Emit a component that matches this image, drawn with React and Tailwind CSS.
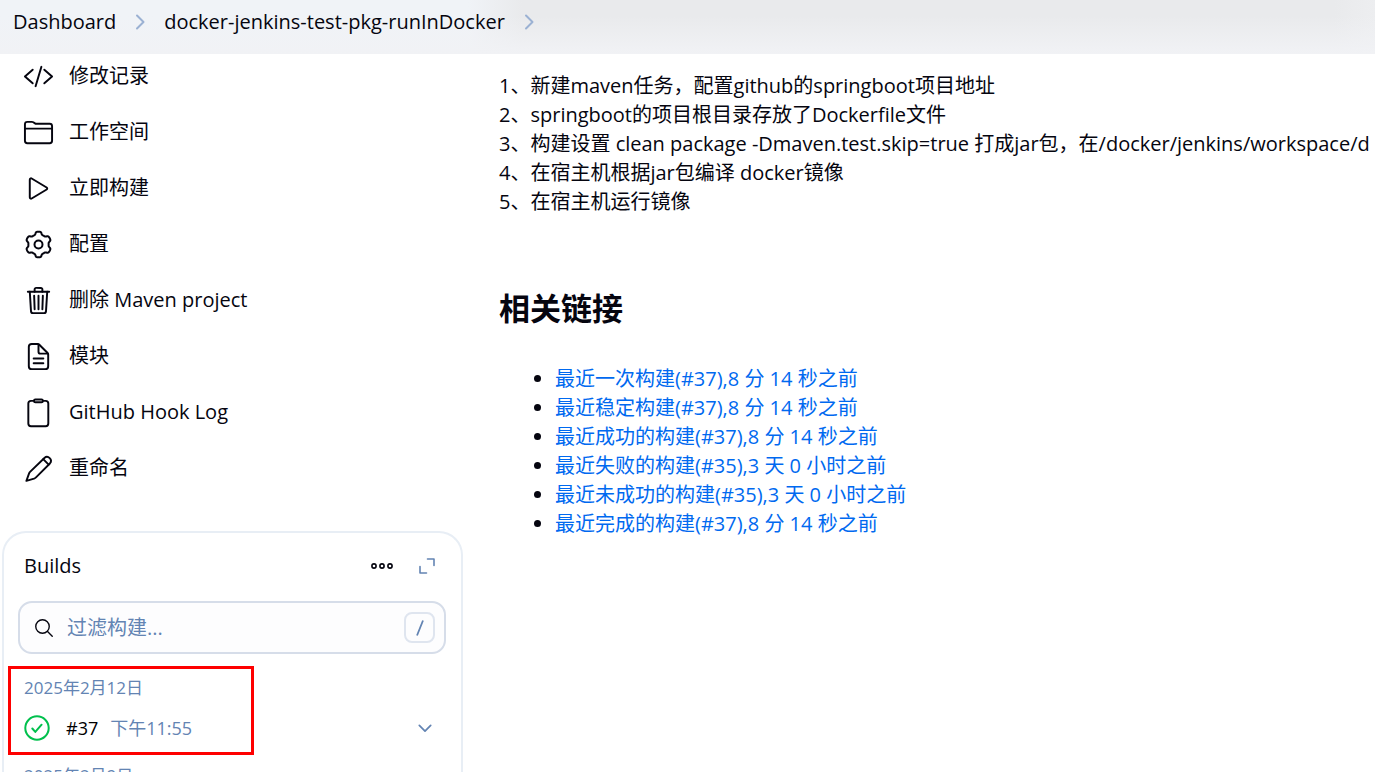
import {
  IoCodeSlashOutline, IoFolderOutline, IoPlayOutline, IoTrashOutline,
  IoDocumentTextOutline, IoSearchOutline,
} from "react-icons/io5";

function ClipboardIcon({ className }) {
  return (
    <svg viewBox="0 0 512 512" fill="none" stroke="currentColor" strokeWidth="32" strokeLinejoin="round" className={className}>
      <path d="M184 64h-52a44 44 0 0 0-44 44v331a44 44 0 0 0 44 44h242a44 44 0 0 0 44-44V108a44 44 0 0 0-44-44h-46" />
      <rect x="182" y="41" width="146" height="46" rx="22" />
    </svg>
  );
}

// Outline of a six-lobed cog, sampled around the circle.
const cogPoints = Array.from({ length: 180 }, (_, i) => {
  const a = (i / 180) * Math.PI * 2;
  const r = 11.5 + 1.4 * Math.tanh(2.2 * Math.cos(6 * a));
  return `${(15.5 + r * Math.sin(a)).toFixed(2)},${(15.5 - r * Math.cos(a)).toFixed(2)}`;
}).join(" ");

function CogIcon({ className }) {
  return (
    <svg viewBox="0 0 31 31" fill="none" stroke="currentColor" strokeWidth="2" strokeLinejoin="round" className={className}>
      <polygon points={cogPoints} />
      <circle cx="15.5" cy="15.5" r="4" />
    </svg>
  );
}

function PencilIcon({ className }) {
  return (
    <svg viewBox="0 0 31 31" fill="none" stroke="currentColor" strokeWidth="1.9" strokeLinecap="round" strokeLinejoin="round" className={className}>
      <path d="M3.4 27.9 6 20.6c.3-.8.7-1.4 1.3-2L21.4 5a3.9 3.9 0 0 1 5.5 5.5L13 24.3c-.6.6-1.2 1-2 1.4z" />
      <path d="m20.2 6.200 5.500 5.500" />
    </svg>
  );
}

const tasks = [
  { label: "修改记录", Icon: IoCodeSlashOutline },
  { label: "工作空间", Icon: IoFolderOutline },
  { label: "立即构建", Icon: IoPlayOutline },
  { label: "配置", Icon: CogIcon },
  { label: "删除 Maven project", Icon: IoTrashOutline },
  { label: "模块", Icon: IoDocumentTextOutline },
  { label: "GitHub Hook Log", Icon: ClipboardIcon },
  { label: "重命名", Icon: PencilIcon },
];

const notes = [
  "1、新建maven任务，配置github的springboot项目地址",
  "2、springboot的项目根目录存放了Dockerfile文件",
  "3、构建设置 clean package -Dmaven.test.skip=true 打成jar包，在/docker/jenkins/workspace/d",
  "4、在宿主机根据jar包编译 docker镜像",
  "5、在宿主机运行镜像",
];

const links = [
  "最近一次构建(#37),8 分 14 秒之前",
  "最近稳定构建(#37),8 分 14 秒之前",
  "最近成功的构建(#37),8 分 14 秒之前",
  "最近失败的构建(#35),3 天 0 小时之前",
  "最近未成功的构建(#35),3 天 0 小时之前",
  "最近完成的构建(#37),8 分 14 秒之前",
];

function Chevron({ className }) {
  return (
    <svg viewBox="0 0 16 16" fill="none" stroke="currentColor" strokeWidth="2" strokeLinecap="round" strokeLinejoin="round" className={className}>
      <path d="M5 1.5 11.5 8 5 14.5" />
    </svg>
  );
}

function Breadcrumbs() {
  return (
    <header className="h-[54px] shrink-0 bg-[#f0f3f7]">
      <div className="h-full bg-[linear-gradient(to_right,transparent_34%,#e9eaec_38%,#e9eaec_97%,#edeef0_100%)]">
        <div className="h-full bg-[linear-gradient(to_bottom,transparent_30%,#f1f2f5_100%)] px-[13px] pt-2">
          <nav aria-label="Breadcrumb" className="flex h-7 items-center">
            <a href="#dashboard">Dashboard</a>
            <Chevron className="mx-4 size-4 text-[#9bb1d3]" />
            <a href="#job">docker-jenkins-test-pkg-runInDocker</a>
            <Chevron className="mx-4 size-4 text-[#9bb1d3]" />
          </nav>
        </div>
      </div>
    </header>
  );
}

function Builds() {
  return (
    <section className="mt-[43px] ml-[2px] rounded-t-[24px] border-2 border-b-0 border-[#e8eef5] pt-[13px] pr-[15px] pl-[14px]">
      <div className="flex h-10 items-center pr-[10px] pl-[6px]">
        <h2 className="flex-1">Builds</h2>
        <button type="button" aria-label="More" className="mr-6">
          <svg viewBox="0 0 24 8" fill="none" stroke="currentColor" strokeWidth="1.6" className="h-2 w-6">
            <circle cx="4" cy="4" r="2.1" />
            <circle cx="12" cy="4" r="2.1" />
            <circle cx="20" cy="4" r="2.1" />
          </svg>
        </button>
        <button type="button" aria-label="Expand" className="text-[#6384b3]">
          <svg viewBox="0 0 18 18" fill="none" stroke="currentColor" strokeWidth="1.6" strokeLinecap="round" strokeLinejoin="round" className="size-[18px]">
            <path d="M9.5 2H16v6.5M2 9.5V16h6.5" />
          </svg>
        </button>
      </div>
      <label className="mt-[15px] flex h-[53px] items-center rounded-[14px] border-2 border-[#d6dde9] bg-[#fdfdfe] pr-[9px] pl-[13px]">
        <IoSearchOutline className="size-[22px] shrink-0" />
        <input
          type="text"
          aria-label="过滤构建"
          placeholder="过滤构建..."
          className="ml-3 min-w-0 flex-1 bg-transparent outline-none placeholder:text-[#6384b3]"
        />
        <kbd className="flex size-[31px] items-center justify-center rounded-lg border-2 border-[#dfe5ef] text-[#6384b3]">
          <svg viewBox="0 0 10 16" fill="none" stroke="currentColor" strokeWidth="1.8" className="h-4 w-[10px]">
            <path d="M8 0.5 2 15.5" />
          </svg>
        </kbd>
      </label>
      <div className="relative mt-[22px] pl-[6px] text-[#6384b3]">
        <div className="absolute -top-[10px] -left-[10px] h-[89px] w-[246px] border-3 border-[#fe0000]" />
        <h3 className="text-[17px] leading-6">2025年2月12日</h3>
        <div className="mt-3 flex h-8 items-center">
          <svg viewBox="0 0 26 26" fill="none" stroke="#00c04d" strokeWidth="2" strokeLinecap="round" strokeLinejoin="round" className="size-[26px]">
            <circle cx="13" cy="13" r="11.7" />
            <path d="m8.3 13.5 3 3.4 6.3-7.2" />
          </svg>
          <a href="#37" className="ml-4 flex flex-1 gap-3 text-lg">
            <span className="text-black">#37</span>
            <span>下午11:55</span>
          </a>
          <button type="button" aria-label="Build menu" className="mr-[14px]">
            <Chevron className="size-[14px] rotate-90" />
          </button>
        </div>
        <h3 className="mt-5 text-[17px] leading-6">2025年2月9日</h3>
      </div>
    </section>
  );
}

export default function App() {
  return (
    <div className="flex h-screen flex-col overflow-hidden bg-white font-['Open_Sans','Noto_Sans_CJK_SC',sans-serif] text-xl text-[#05050f]">
      <Breadcrumbs />
      <div className="flex min-h-0 flex-1 overflow-hidden">
        <aside className="w-[463px] shrink-0">
          <nav aria-label="Tasks" className="flex flex-col gap-4 pt-[2px]">
            {tasks.map(({ label, Icon }) => (
              <a key={label} href="#task" className="flex h-10 items-center gap-[15px] pl-[23px]">
                <Icon className="size-[31px] shrink-0" />
                <span>{label}</span>
              </a>
            ))}
          </nav>
          <Builds />
        </aside>
        <main className="min-w-0 flex-1 overflow-hidden pt-[17px] pl-9">
          <div className="leading-[29px] whitespace-nowrap">
            {notes.map((n) => (
              <p key={n}>{n}</p>
            ))}
          </div>
          <h2 className="mt-[72px] text-[31px] leading-10 font-bold">相关链接</h2>
          <ul className="mt-9 list-disc pl-14 leading-[29px]">
            {links.map((l) => (
              <li key={l}>
                <a href="#build" className="text-[#0069f0]">{l}</a>
              </li>
            ))}
          </ul>
        </main>
      </div>
    </div>
  );
}
